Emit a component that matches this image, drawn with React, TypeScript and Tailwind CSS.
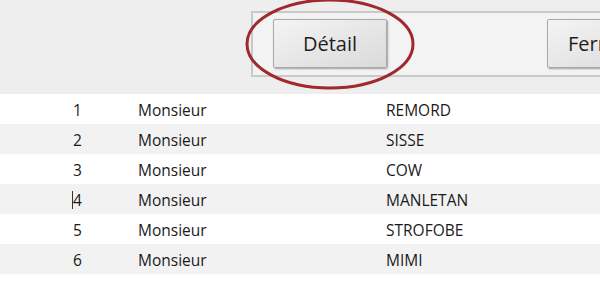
import React from 'react';

const rows = [
  { id: 1, civ: 'Monsieur', nom: 'REMORD' },
  { id: 2, civ: 'Monsieur', nom: 'SISSE' },
  { id: 3, civ: 'Monsieur', nom: 'COW' },
  { id: 4, civ: 'Monsieur', nom: 'MANLETAN' },
  { id: 5, civ: 'Monsieur', nom: 'STROFOBE' },
  { id: 6, civ: 'Monsieur', nom: 'MIMI' },
];

function Button({ label, className }: { label: string; className?: string }) {
  return (
    <button
      className={
        'h-[49px] w-[114px] shrink-0 rounded-[2px] border border-[#a9a9a9] bg-gradient-to-br from-[#f4f4f4] to-[#dadada] text-[20px] text-[#1e1e1e] shadow-[1px_1px_2px_rgba(0,0,0,0.35)] ' +
        (className ?? '')
      }
    >
      {label}
    </button>
  );
}

export default function App() {
  return (
    <div className="relative h-[285px] w-[600px] overflow-hidden bg-white font-['Open_Sans',sans-serif] text-[#1a1a1a]">
      {/* header with form buttons */}
      <div className="h-[94px] bg-[#eeeeee] pt-[11px] pl-[251px]">
        <div className="flex h-[66px] w-[400px] items-start gap-[160px] border-2 border-r-0 border-[#c9c9c9] bg-[#f3f3f3] pt-[6px] pl-[20px]">
          <Button label="Détail" />
          <Button label="Fermer" className="text-left pl-[20px]" />
        </div>
      </div>

      {/* list */}
      <div className="flex flex-col">
        {rows.map((r, i) => (
          <div
            key={r.id}
            className={'flex h-[30px] items-center pt-[3px] text-[15.5px] ' + (i % 2 ? 'bg-[#f2f2f2]' : 'bg-white')}
          >
            <div className="relative w-[138px] pl-[73px]">
              {r.id === 4 && <span className="absolute left-[72px] top-[2px] h-[18px] w-px bg-[#333]" />}
              {r.id}
            </div>
            <div className="w-[248px]">{r.civ}</div>
            <div>{r.nom}</div>
          </div>
        ))}
      </div>

      {/* red highlight ring */}
      <svg className="pointer-events-none absolute left-0 top-0" width="600" height="285">
        <ellipse cx="330" cy="44" rx="83" ry="44" fill="none" stroke="#9e2a2e" strokeWidth="3" />
      </svg>
    </div>
  );
}
